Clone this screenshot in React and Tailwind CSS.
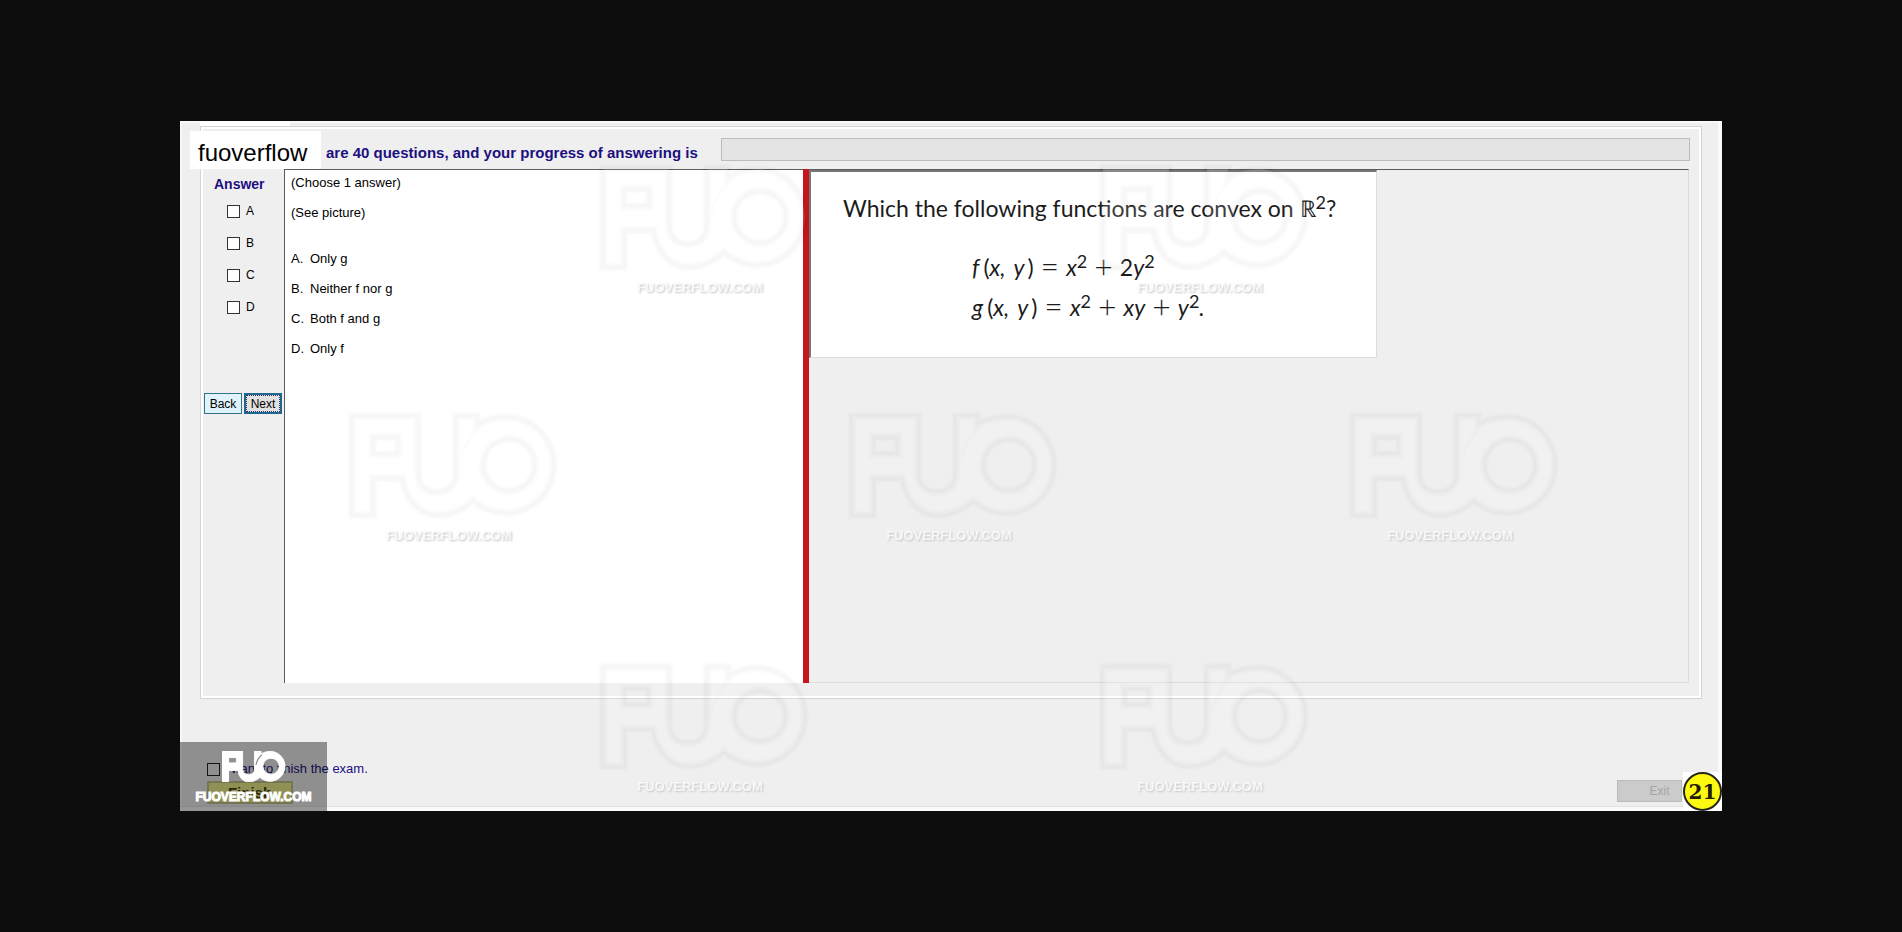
const MARK = 'M0 0H66V56Q66 76 85 76Q104 76 104 56V0H125V9Q138 1 157 1A48 48 0 1 1 121 84Q106 99 84 99Q58 97 50 62H21V99H0ZM21 21V38H46V21ZM157 23A26 26 0 1 0 157 75A26 26 0 1 0 157 23Z';
const GROOVE = 'M128 12Q113 24 109 44';

const watermarks = [
  'left-[420px] top-[44px]',
  'left-[920px] top-[44px]',
  'left-[169px] top-[292px]',
  'left-[669px] top-[292px]',
  'left-[1170px] top-[292px]',
  'left-[420px] top-[543px]',
  'left-[920px] top-[543px]',
];

const choices = ['A', 'B', 'C', 'D'];
const options = ['Only g', 'Neither f nor g', 'Both f and g', 'Only f'];

function Watermark({ place }) {
  return (
    <div aria-hidden="true" className={`pointer-events-none absolute ${place} flex w-[212px] flex-col items-center`}>
      <svg viewBox="-3 -3 212 106" className="h-[106px] w-[212px] overflow-visible">
        <g fill="none" stroke="#000" strokeOpacity="0.01">
          <path d={MARK} strokeWidth="9" />
          <path d={MARK} strokeWidth="6" />
          <path d={MARK} strokeWidth="3" />
          <path d={GROOVE} strokeWidth="3" />
        </g>
        <path d={MARK} fill="#fff" fillOpacity="0.15" fillRule="evenodd" />
      </svg>
      <span className="mt-[9px] mr-3 text-[13px] leading-4 font-bold text-white/80 [text-shadow:1px_1px_2px_#c4c4c4]">FUOVERFLOW.COM</span>
    </div>
  );
}

function Sup({ children }) {
  return <sup className="relative -top-2 align-baseline text-[18px] leading-none not-italic">{children}</sup>;
}

function Op({ children }) {
  return <span className="mx-[7px] align-[-2px] text-[32px] leading-none font-light not-italic">{children}</span>;
}

function Args() {
  return (
    <>
      <span className="ml-[4px] not-italic">(</span>x,<span className="ml-[8px]">y</span>
      <span className="ml-[3px] not-italic">)</span>
    </>
  );
}

export default function App() {
  return (
    <div className="flex min-h-screen items-center bg-[#0d0d0d] px-[180px] font-['Liberation_Sans',sans-serif] text-black">
      <main className="relative w-full overflow-hidden bg-[#efefef] pb-1 shadow-[inset_-4px_-4px_0_#fafafa,inset_2px_2px_0_#f8f8f8]">
        <div className="ml-5 h-[5px] w-[90px] bg-white" />

        <section className="mr-5 ml-5 border border-[#d4d4d4] shadow-[inset_2px_2px_0_#fff,inset_-2px_-2px_0_#fff]">
          <header className="-ml-[11px] flex h-[42px] items-end pr-[11px]">
            <h1 className="h-[38px] w-[131px] shrink-0 bg-white pl-2 text-[24px] leading-[44px]">fuoverflow</h1>
            <p className="ml-[5px] w-[395px] shrink-0 pb-[6px] text-[15px] leading-5 font-bold whitespace-nowrap text-[#1c0f80]">
              are 40 questions, and your progress of answering is
            </p>
            <div
              role="progressbar"
              aria-label="Progress of answering"
              className="mb-2 h-[23px] flex-1 border border-[#bcbcbc] bg-[#e4e4e4]"
            />
          </header>

          <div className="flex h-[529px] pr-[12px] pb-[15px]">
            <aside className="flex w-[83px] shrink-0 flex-col">
              <h2 className="mt-[5px] ml-[13px] text-[14px] leading-5 font-bold text-[#1c0f80]">Answer</h2>
              <div className="mt-[5px] flex flex-col gap-2 pl-[26px]">
                {choices.map((c) => (
                  <label key={c} className="flex h-6 items-center gap-[6px] text-[12px]">
                    <input type="checkbox" className="size-[13px] appearance-none border border-[#333] bg-white checked:bg-[#333]" />
                    {c}
                  </label>
                ))}
              </div>
              <div className="mt-[74px] flex gap-[2px] pl-[3px]">
                <button className="h-[21px] w-[38px] border border-[#32738a] bg-[#e0f3fa] text-[12px] leading-4">Back</button>
                <button className="h-[21px] w-[38px] border-2 border-[#1f6690] bg-[#e1e1e1] text-[12px] leading-4 outline-1 -outline-offset-3 outline-[#335] outline-dotted">Next</button>
              </div>
            </aside>

            <div className="flex min-w-0 flex-1">
              <article className="w-[519px] shrink-0 border-t border-l border-[#5b5b5b] bg-white pt-[3px] pl-[6px] text-[13px] leading-[20px]">
                <p>(Choose 1 answer)</p>
                <p className="mt-[10px]">(See picture)</p>
                <ol className="mt-[26px] flex flex-col gap-[10px]">
                  {options.map((o, i) => (
                    <li key={o} className="flex">
                      <span className="w-[19px]">{choices[i]}.</span>
                      {o}
                    </li>
                  ))}
                </ol>
              </article>
              <div className="w-[6px] shrink-0 bg-[#c4161c]" />
              <div className="min-w-0 flex-1 border-t border-r border-b border-t-[#5b5b5b] border-r-[#dcdcdc] border-b-[#dcdcdc]">
                <figure className="h-[188px] w-[568px] border-t-2 border-r border-b border-l-2 border-[#777] border-r-[#ddd] border-b-[#ddd] bg-white pt-[16px] pl-[32px] font-['Lato',sans-serif] text-[23px] leading-[40px] whitespace-nowrap text-[#1c1c1c]">
                  <p>Which the following functions are convex on ℝ<Sup>2</Sup>?</p>
                  <p className="mt-[19px] ml-[129px] h-10 italic">
                    f<Args /><Op>=</Op>x<Sup>2</Sup><Op>+</Op><span className="not-italic">2</span>y<Sup>2</Sup>
                  </p>
                  <p className="ml-[129px] h-10 italic">
                    g<Args /><Op>=</Op>x<Sup>2</Sup><Op>+</Op>xy<Op>+</Op>y<Sup>2</Sup>.
                  </p>
                </figure>
              </div>
            </div>
          </div>
        </section>

        <footer className="flex h-[108px] items-end justify-between border-b border-[#e2e2e2] pr-10 pl-[27px]">
          <div className="pb-[2px]">
            <label className="flex items-center gap-[4px] text-[13px] leading-5 text-[#1c0f80]">
              <input type="checkbox" className="size-[13px] appearance-none border border-[#222] checked:bg-[#333]" />
              I want to finish the exam.
            </label>
            <button className="mt-[2px] block h-[23px] w-[86px] border-2 border-[#c4c48c] bg-[#f0f08c] text-[15px] leading-4 font-bold text-[#444410]">Finish</button>
          </div>
          <button disabled className="mb-[4px] h-[22px] w-[65px] border border-[#bbb] bg-[#cbcbcb] pl-5 text-[12px] text-[#a4a4a4]">Exit</button>
        </footer>

        {watermarks.map((place) => (
          <Watermark key={place} place={place} />
        ))}

        <div className="pointer-events-none absolute bottom-0 left-0 flex h-[69px] w-[147px] flex-col items-center bg-black/40 text-white">
          <svg aria-hidden="true" viewBox="0 0 205 99" className="mt-[9px] h-[31px] w-[64px]">
            <path d={MARK} fill="#fff" fillRule="evenodd" stroke="#fff" strokeWidth="3" />
            <path d={GROOVE} fill="none" stroke="#8f8f8f" strokeWidth="4" />
          </svg>
          <span className="mt-[5px] text-[12px] leading-5 font-bold [-webkit-text-stroke:1px_#fff]">FUOVERFLOW.COM</span>
        </div>

        <div className="absolute right-0 bottom-0 bg-white">
          <div className="flex size-[39px] items-center justify-center rounded-full border-2 border-[#26261a] bg-[#fdf911] font-['DejaVu_Serif',serif] text-[20px] leading-none font-bold text-[#221c08]">
            21
          </div>
        </div>
      </main>
    </div>
  );
}
